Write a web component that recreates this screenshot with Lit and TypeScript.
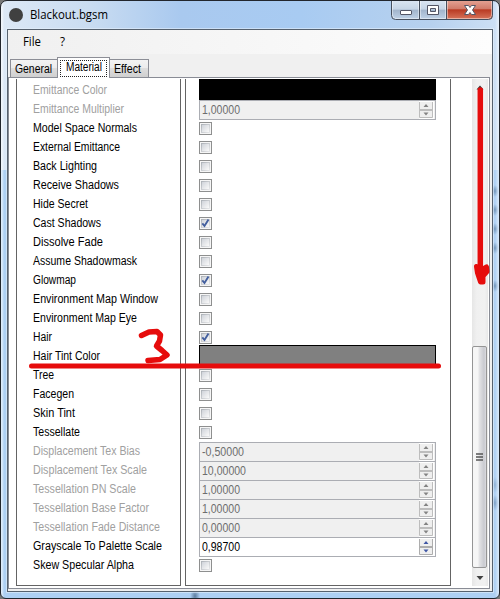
import { LitElement, html, css, svg } from "lit";
import { customElement, property } from "lit/decorators.js";
import { classMap } from "lit/directives/class-map.js";
import { styleMap } from "lit/directives/style-map.js";

type Kind = "check" | "color" | "number";
interface Row {
  label: string;
  kind: Kind;
  value?: string;
  on?: boolean;
  disabled?: boolean;
  width: number;
}

const check = (label: string, width: number, on = false): Row => ({ label, kind: "check", on, width });
const num = (label: string, width: number, value: string, disabled = true): Row => ({ label, kind: "number", value, disabled, width });

const ROWS: Row[] = [
  { label: "Emittance Color", kind: "color", value: "#000000", disabled: true, width: 74 },
  num("Emittance Multiplier", 91, "1,00000"),
  check("Model Space Normals", 104),
  check("External Emittance", 87),
  check("Back Lighting", 64),
  check("Receive Shadows", 86),
  check("Hide Secret", 55),
  check("Cast Shadows", 68, true),
  check("Dissolve Fade", 70),
  check("Assume Shadowmask", 104),
  check("Glowmap", 43, true),
  check("Environment Map Window", 125),
  check("Environment Map Eye", 104),
  check("Hair", 19, true),
  { label: "Hair Tint Color", kind: "color", value: "#808080", width: 67 },
  check("Tree", 21),
  check("Facegen", 41),
  check("Skin Tint", 42),
  check("Tessellate", 47),
  num("Displacement Tex Bias", 107, "-0,50000"),
  num("Displacement Tex Scale", 114, "10,00000"),
  num("Tessellation PN Scale", 103, "1,00000"),
  num("Tessellation Base Factor", 116, "1,00000"),
  num("Tessellation Fade Distance", 127, "0,00000"),
  num("Grayscale To Palette Scale", 129, "0,98700", false),
  check("Skew Specular Alpha", 101),
];

@customElement("fit-text")
class FitText extends LitElement {
  @property() text = "";
  @property({ type: Number }) width = 50;
  static styles = css`
    :host { display: block; height: 16px; }
    svg { display: block; overflow: visible; }
  `;
  render() {
    return html`<svg width=${this.width} height="16">
      <text x="0" y="12" fill="currentColor" textLength=${this.width} lengthAdjust="spacingAndGlyphs">${this.text}</text>
    </svg>`;
  }
}

@customElement("check-box")
class CheckBox extends LitElement {
  @property({ type: Boolean }) on = false;
  static styles = css`
    :host { display: block; width: 13px; height: 13px; }
    svg { display: block; }
  `;
  render() {
    return html`<svg width="13" height="13">
      <defs><linearGradient id="g" x1="0" y1="0" x2="1" y2="1">
        <stop offset="0" stop-color="#cdd1d8" /><stop offset=".9" stop-color="#f8f8f8" />
      </linearGradient><linearGradient id="e" x1="0" y1="0" x2="1" y2="1">
        <stop offset="0" stop-color="#aeb3b9" /><stop offset="1" stop-color="#e6e7e9" />
      </linearGradient></defs>
      <rect x=".5" y=".5" width="12" height="12" fill="#f6f6f6" stroke="#8e8f8f" />
      <rect x="2.5" y="2.5" width="8" height="8" fill="url(#g)" stroke="url(#e)" />
      ${this.on ? svg`<path d="M3.3 6.4 L5.5 9 L9.5 2.6" fill="none" stroke="#435f9e" stroke-width="1.9" />` : ""}
    </svg>`;
  }
}

@customElement("number-box")
class NumberBox extends LitElement {
  @property() value = "";
  @property({ type: Boolean }) disabled = false;
  static styles = css`
    :host { display: block; }
    .box { box-sizing: border-box; width: 237px; height: 20px; border: 1px solid #abadb3; background: #fff;
      display: flex; justify-content: space-between; color: #000; }
    .disabled { background: #f0f0f0; color: #6d6d6d; }
    fit-text { margin: 1px 0 0 2px; }
    svg { display: block; margin-right: 1px; }
  `;
  render() {
    const edge = this.disabled ? "#bdbdbd" : "#adadad";
    const mark = this.disabled ? "#838383" : "#3f57a5";
    const wide = this.value.length > 7;
    const w = this.value.startsWith("-") ? 42 : wide ? 44 : 38;
    return html`<div class=${classMap({ box: true, disabled: this.disabled })}>
      <fit-text .text=${this.value} .width=${w}></fit-text>
      <svg width="15" height="18">
        <rect width="15" height="18" fill="#fff" />
        <rect x=".5" y="1" width="13" height="16" fill="#efefef" />
        <path d="M.5 1V16.500H13.500V1" fill="none" stroke=${edge} />
        <path d="M1 9H13" stroke=${edge} stroke-width="2" />
        <path d="M4.5 6L7 3L9.500 6ZM4.500 11.500H9.500L7 14.500Z" fill=${mark} />
      </svg>
    </div>`;
  }
}

@customElement("app-root")
class AppRoot extends LitElement {
  static styles = css`
    :host { display: block; width: 500px; height: 599px; font: 12px "Liberation Sans", Arial, sans-serif; color: #000; }
    * { box-sizing: border-box; }
    .window { position: relative; width: 500px; height: 599px; overflow: hidden; border: 1px solid #22262d;
      border-radius: 7px 7px 6px 6px; padding: 0 6px 6px;
      background: linear-gradient(90deg, #ffffff90 0 1px, transparent 3px 494px, #ffffff90 498px),
        radial-gradient(ellipse 4px 6px at 494px 190px, #6f93b8, transparent),
        radial-gradient(ellipse 4px 6px at 494px 209px, #6f93b8, transparent),
        radial-gradient(ellipse 4px 6px at 494px 228px, #6f93b8, transparent),
        radial-gradient(ellipse 4px 6px at 494px 247px, #6f93b8, transparent),
        radial-gradient(ellipse 4px 6px at 494px 285px, #6f93b8, transparent),
        radial-gradient(ellipse 4px 8px at 494px 484px, #8db0d4, transparent),
        radial-gradient(ellipse 4px 8px at 494px 502px, #7c9fc4, transparent),
        radial-gradient(ellipse 5px 8px at 194px 595px, #5d7d9f, transparent),
        linear-gradient(180deg, transparent 0 169px, #aed0f3 169px),
        linear-gradient(90deg, #dce8f6 0, #c9dcf1 90px, #a9c9ef 180px, #a8cbf2 300px, #b7d1ee 430px, #cde0f5 100%);
    }
    .page { background: #777; }
    .title { height: 28px; display: flex; padding: 0 0 0 1px; }
    .dot { width: 14px; height: 14px; border-radius: 50%; background: #404040; margin: 7px 6.500px 0 1px; }
    .name { font: 12px "Open Sans", sans-serif; margin-top: 6px; flex: 1; }
    .caption { display: block; margin: 0 -1px 0 0; }
    .client { height: 563px; border: 1px solid #56616e; background: #f0f0f0; outline: 1px solid #e6f1fc90; }
    .menu { height: 24px; display: flex; background: linear-gradient(90deg, #f0f0f0, #fdfdfd); padding: 4px 0 0 15px; gap: 19px;
      font: 12px "Open Sans", sans-serif; }
    .tabs { height: 23px; display: flex; align-items: flex-end; padding-left: 2px; }
    .tab { height: 18px; border: 1px solid #8c8e96; border-bottom: 0; background: linear-gradient(#f3f3f3, #ebebeb 50%, #dddddd 50%, #d0d0d0);
      padding: 1px 0 0 4px; }
    .tab.first { width: 47px; border-right: 0; }
    .tab.last { width: 39px; border-left: 0; }
    .tab.active { width: 53px; height: 21px; background: #fff; margin-bottom: -1px; z-index: 1; padding: 2px 0 0 2px; }
    .focus { width: 47px; height: 17px; border: 1px dotted #222; padding-left: 5px; }
    .focus fit-text { margin-top: -2px; }
    .sheet { height: 512px; width: 482px; border: 1px solid #898c95; background: #fff; display: flex; padding-top: 1px; }
    .col { height: 507px; border: 1px solid #646464; border-top: 0; overflow: hidden; padding-top: 2px; }
    .labels { width: 165px; margin: 0 4px 0 7px; padding: 3px 0 0 16px; }
    .values { width: 266px; padding-left: 13px; }
    .row { height: 19px; display: flex; align-items: flex-start; }
    .off { color: #a0a0a0; }
    .row > check-box { margin-top: 3px; }
    .swatch { width: 237px; height: 21px; margin-top: -2px; border: 1px solid #000; flex: none; }
    .scroll { display: flex; flex-direction: column; width: 16px; height: 507px; margin-left: 21px;
      background: linear-gradient(90deg, #e6e6e6, #f0f0f0 30%, #f1f1f1 80%, #e8e8e8); padding-top: 267px; }
    .thumb { width: 15px; height: 222px; border: 1px solid #959595; border-radius: 2px; display: grid; place-items: center;
      background: linear-gradient(90deg, #f6f6f6 0 5px, #e5e5e7 6px, #c9cad0 11px, #dcdce0); }
    .down { margin: 7px 0 0 4px; }
    .ink { position: absolute; left: -1px; top: -1px; pointer-events: none; }
  `;

  private value(r: Row) {
    if (r.kind === "check") return html`<check-box .on=${!!r.on}></check-box>`;
    if (r.kind === "color") return html`<div class="swatch" style=${styleMap({ background: r.value! })}></div>`;
    return html`<number-box .value=${r.value!} .disabled=${!!r.disabled}></number-box>`;
  }

  private captionButtons() {
    return html`<svg class="caption" width="103" height="20">
      <defs>
        <linearGradient id="b" x2="0" y2="1"><stop offset="0" stop-color="#dbe6f3" /><stop offset=".48" stop-color="#c6d5e6" />
          <stop offset=".5" stop-color="#a1b4cb" /><stop offset="1" stop-color="#c0d3e8" /></linearGradient>
        <linearGradient id="r" x2="0" y2="1"><stop offset="0" stop-color="#e5a496" /><stop offset=".46" stop-color="#d07a69" />
          <stop offset=".5" stop-color="#b93a23" /><stop offset="1" stop-color="#d8765d" /></linearGradient>
      </defs>
      <path d="M.5 -1V14.5Q.5 18.5 4.5 18.5H55.500V-1Z" fill="url(#b)" />
      <path d="M55.500 -1V18.500H97.500Q101.500 18.500 101.500 14.500V-1Z" fill="url(#r)" />
      <path d="M1.500 0V14Q1.500 17.500 5 17.500H27.500V0M29.500 0V17.500H54.500V0M56.500 0V17.500H97Q100.500 17.500 100.500 14V0" fill="none" stroke="#fff" stroke-opacity=".45" />
      <path d="M.5 -1V14.5Q.5 18.5 4.5 18.5H97.500Q101.500 18.500 101.500 14.500V-1M28.500 0V18M55.500 0V18" fill="none" stroke="#46505f" />
      <rect x="9.500" y="9.500" width="11" height="4" rx=".5" fill="#fff" stroke="#535666" />
      <path d="M36.500 4.500H47.500V13.500H36.500ZM39.500 7.500V10.500H44.500V7.500Z" fill="#fff" fill-rule="evenodd" stroke="#535666" />
      <path d="M73.500 4.500H77.500L79 6.500L80.500 4.500H84.500L81.500 9L84.500 13.500H80.500L79 11.500L77.500 13.500H73.500L76.500 9Z" fill="#fff" stroke="#535666" />
    </svg>`;
  }

  render() {
    return html`<div class="page"><div class="window">
      <div class="title">
        <div class="dot"></div>
        <div class="name"><fit-text .text=${"Blackout.bgsm"} .width=${78}></fit-text></div>
        ${this.captionButtons()}
      </div>
      <div class="client">
        <div class="menu">
          <fit-text .text=${"File"} .width=${18}></fit-text>
          <fit-text .text=${"?"} .width=${5}></fit-text>
        </div>
        <div class="tabs">
          <div class="tab first"><fit-text .text=${"General"} .width=${37}></fit-text></div>
          <div class="tab active"><div class="focus"><fit-text .text=${"Material"} .width=${36}></fit-text></div></div>
          <div class="tab last"><fit-text .text=${"Effect"} .width=${27}></fit-text></div>
        </div>
        <div class="sheet">
          <div class="col labels">
            ${ROWS.map((r) => html`<div class=${classMap({ row: true, off: !!r.disabled })}>
              <fit-text .text=${r.label} .width=${r.width}></fit-text></div>`)}
          </div>
          <div class="col values">${ROWS.map((r) => html`<div class="row">${this.value(r)}</div>`)}</div>
          <div class="scroll">
            <div class="thumb"><svg width="8" height="9"><path d="M0 1H7M0 4H7M0 7H7" stroke="#555" stroke-width="1.500" /></svg></div>
            <svg class="down" width="9" height="6"><path d="M.5 1H7.500L4 5Z" fill="#404040" /></svg>
          </div>
        </div>
      </div>
      <svg class="ink" width="500" height="599" fill="none" stroke="#e60c0c" stroke-linecap="round" stroke-linejoin="round">
        <path d="M476.500 89.500L480 85.500L483.500 89.500Z" fill="#333" stroke="none" />
        <path d="M31.500 366H438.500" stroke-width="5" />
        <path d="M141.500 335.500L149 332L157 331.500L160.500 335L159.500 341L156.500 346L162 350.500L167 355L160 359.500L148 360.500" stroke-width="5.500" />
        <path d="M480.300 90V275" stroke-width="5.500" />
        <path d="M476.500 266.500L480 271L486.500 267L487 271.500L483 276V282H480.500L477.500 273Z" stroke-width="5" fill="#e60c0c" />
      </svg>
    </div></div>`;
  }
}
